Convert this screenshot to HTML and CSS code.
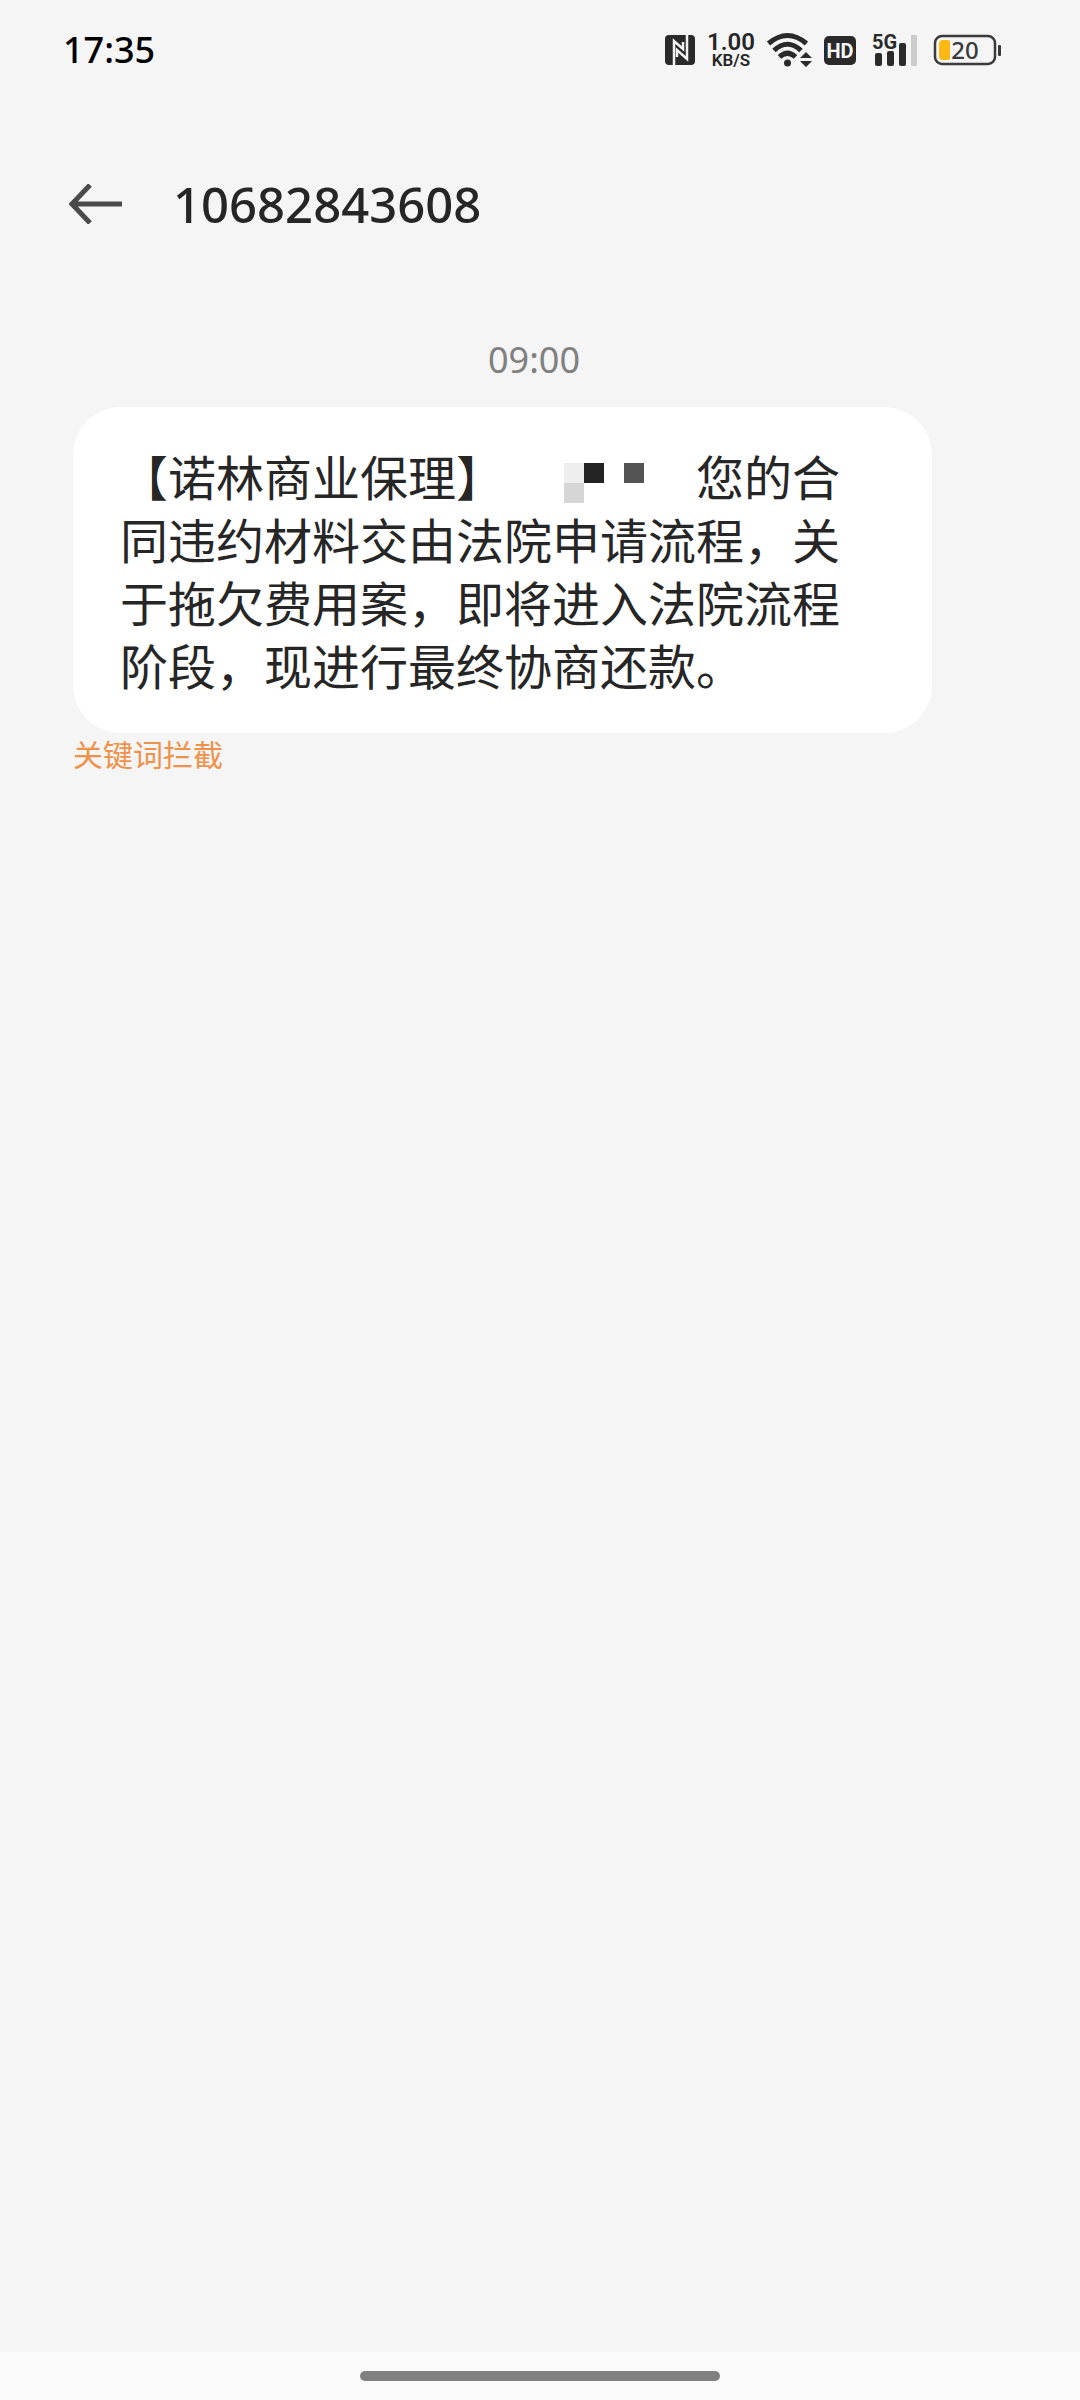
FILE: index.html
```
<!DOCTYPE html>
<html lang="zh-CN">
<head>
  <meta charset="UTF-8" />
  <meta name="viewport" content="width=device-width, initial-scale=1.0"/>
  <title>10682843608</title>
  <link rel="stylesheet" href="styles.css">
</head>
<body>

  <div class="status-bar">
    <span class="clock">17:35</span>
    <div class="status-icons">
      <svg class="nfc" width="30" height="30" viewBox="0 0 30 30" aria-label="NFC">
        <rect width="30" height="30" rx="4" fill="#2a2a2a"/>
        <path fill="none" stroke="#f5f5f5" stroke-width="2.500" d="M9 30V6L18 14V7"/>
        <path fill="none" stroke="#f5f5f5" stroke-width="2.500" d="M22 0V24L12 15V22"/>
      </svg>
      <div class="net-speed">
        <span class="speed-value">1.00</span>
        <span class="speed-unit">KB/S</span>
      </div>
      <svg class="wifi" width="45" height="34" viewBox="0 0 45 34" aria-label="Wi-Fi">
        <g fill="none" stroke="#2a2a2a" stroke-width="5">
          <path d="M1.500 10.500Q20.500-5.500 39.500 10.500"/>
          <path d="M7 17.500Q20.500 5 34 17.500"/>
          <path d="M12.500 24Q20.500 16.500 28.500 24"/>
        </g>
        <circle cx="20.500" cy="30" r="3.500" fill="#2a2a2a"/>
        <path fill="#2a2a2a" d="M39 19L45 25H33ZM39 34L33 28H45Z"/>
      </svg>
      <svg class="hd" width="32" height="29" viewBox="0 0 32 29">
        <rect width="32" height="29" rx="5" fill="#2a2a2a"/>
        <text x="16" y="22" text-anchor="middle" class="hd-text">HD</text>
      </svg>
      <svg class="signal" width="46" height="34" viewBox="0 0 46 34">
        <text x="0" y="16" class="signal-text">5G</text>
        <rect x="3" y="20" width="7" height="13" rx="2" fill="#2a2a2a"/>
        <rect x="15" y="18" width="7" height="15" rx="2" fill="#2a2a2a"/>
        <rect x="27" y="10" width="7" height="23" rx="2" fill="#2a2a2a"/>
        <rect x="39" y="2" width="6" height="31" rx="1" fill="#cccccc"/>
      </svg>
      <svg class="battery" width="67" height="30" viewBox="0 0 67 30">
        <rect x="1" y="1" width="60" height="28" rx="7" fill="none" stroke="#3a3a3a" stroke-width="2.500"/>
        <path fill="#fdb813" d="M9 5H14Q16 5 16 7V23Q16 25 14 25H9Q5 25 5 21V9Q5 5 9 5Z"/>
        <rect x="64" y="10" width="3" height="11" rx="1" fill="#3a3a3a"/>
        <text x="31" y="24" text-anchor="middle" class="battery-text">20</text>
      </svg>
    </div>
  </div>

  <header class="header">
    <button class="back" type="button" aria-label="返回">
      <svg width="54" height="40" viewBox="0 0 54 40" fill="none" stroke="#4a4a4a" stroke-width="5">
        <path d="M21 1L3 20L21 39M3 20H53"/>
      </svg>
    </button>
    <h1>10682843608</h1>
  </header>

  <main class="messages">
    <time class="msg-time">09:00</time>
    <div class="bubble">
      <p>【诺林商业保理】<span class="mosaic"><svg width="80" height="40" viewBox="0 0 80 40">
        <rect width="20" height="20" fill="#eeeeee"/>
        <rect y="20" width="20" height="20" fill="#d6d6d6"/>
        <rect x="20" width="20" height="20" fill="#232323"/>
        <rect x="60" width="20" height="20" fill="#545454"/>
      </svg></span>您的合同违约材料交由法院申请流程，关于拖欠费用案，即将进入法院流程阶段，现进行最终协商还款。</p>
    </div>
    <div class="block-reason">关键词拦截</div>
  </main>

  <div class="nav-bar">
    <div class="handle"></div>
  </div>

</body>
</html>
```

FILE: styles.css
```
* {
  box-sizing: border-box;
}
body {
  font-family: "Noto Sans", "Noto Sans CJK SC", sans-serif;
  margin: 0;
  min-height: 100vh;
  display: flex;
  flex-direction: column;
  background-color: #f5f5f5;
  color: #262626;
}
h1, p {
  margin: 0;
}
.status-bar {
  display: flex;
  justify-content: space-between;
  align-items: center;
  height: 100px;
  padding: 0 79px 0 63px;
}
.clock {
  font-size: 36px;
  font-weight: 500;
  color: #000;
  line-height: 48px;
}
.status-icons {
  display: flex;
  align-items: center;
  gap: 12px;
}
.status-icons svg {
  overflow: visible;
}
.net-speed {
  display: flex;
  flex-direction: column;
  align-items: center;
  width: 48px;
  font-family: Roboto, sans-serif;
}
.speed-value {
  font-size: 24px;
  font-weight: 600;
  line-height: 20px;
}
.speed-unit {
  font-size: 17px;
  font-weight: 600;
  line-height: 16px;
}
.hd-text {
  font-size: 20px;
  font-weight: 700;
  fill: #f5f5f5;
  font-family: Roboto, sans-serif;
}
.signal {
  margin: 0 4px;
}
.signal-text {
  font-size: 20px;
  font-weight: 700;
  fill: #2a2a2a;
  font-family: Roboto, sans-serif;
}
.battery-text {
  font-size: 24px;
  font-weight: 500;
  fill: #3a3a3a;
}
.header {
  display: flex;
  align-items: center;
  gap: 50px;
  height: 208px;
  padding: 0 69px;
}
.back {
  display: flex;
  padding: 0;
  border: none;
  background: none;
  cursor: pointer;
}
.header h1 {
  font-size: 49px;
  font-weight: 500;
}
.messages {
  flex: 1;
  padding: 28px 85px 0 73px;
}
.msg-time {
  display: block;
  text-align: center;
  font-size: 36px;
  font-weight: 400;
  line-height: 48px;
  color: #808080;
  margin-bottom: 23px;
}
.bubble {
  max-width: 859px;
  padding: 37px 72px 37px 47px;
  border-radius: 48px;
  background-color: #fff;
}
.bubble p {
  font-family: "Noto Sans CJK SC", sans-serif;
  font-size: 48px;
  line-height: 63px;
}
.mosaic {
  display: inline-flex;
  justify-content: center;
  width: 192px;
  padding-left: 8px;
  vertical-align: middle;
}
.block-reason {
  font-family: "Noto Sans CJK SC", sans-serif;
  font-size: 30px;
  line-height: 40px;
  color: #ee924a;
}
.nav-bar {
  display: flex;
  justify-content: center;
  align-items: center;
  height: 48px;
  background-color: #fafafa;
}
.handle {
  width: 33.33%;
  height: 10px;
  border-radius: 5px;
  background-color: #808080;
}
```
